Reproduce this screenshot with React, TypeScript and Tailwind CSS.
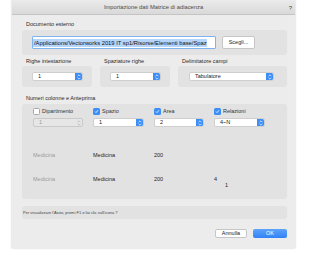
import React from 'react';

const font = { fontFamily: '"Liberation Sans", Arial, sans-serif' };

const Stepper: React.FC<{ disabled?: boolean }> = ({ disabled }) => (
  <div
    className={
      disabled
        ? 'w-[7px] h-full flex items-center justify-center text-[#b0b0b0]'
        : 'w-[7px] h-full flex items-center justify-center bg-[#3d8ef6] rounded-r-[1.5px] text-white'
    }
  >
    <svg width="4" height="6" viewBox="0 0 4 6">
      <path d="M0.6 2.2 L2 0.8 L3.4 2.2 M0.6 3.8 L2 5.2 L3.4 3.8" fill="none" stroke="currentColor" strokeWidth="0.7" />
    </svg>
  </div>
);

const Select: React.FC<{ value: string; width: string; disabled?: boolean }> = ({ value, width, disabled }) => (
  <div
    className={
      (disabled ? 'bg-[#e6e6e6] border-[#c9c9c9] text-[#9a9a9a] ' : 'bg-white border-[#cfcfcf] text-[#222] ') +
      width +
      ' h-[9px] border-[0.5px] rounded-[2px] flex items-center justify-between text-[5.5px] leading-none'
    }
  >
    <span className="pl-[5px]">{value}</span>
    <Stepper disabled={disabled} />
  </div>
);

const Check: React.FC<{ checked?: boolean; label: string }> = ({ checked, label }) => (
  <div className="flex items-center gap-[2px] h-[7px]">
    {checked ? (
      <div className="w-[7px] h-[7px] rounded-[1.5px] bg-[#3d8ef6] flex items-center justify-center">
        <svg width="5" height="5" viewBox="0 0 5 5">
          <path d="M1 2.6 L2 3.6 L4 1.2" fill="none" stroke="white" strokeWidth="0.8" />
        </svg>
      </div>
    ) : (
      <div className="w-[7px] h-[7px] rounded-[1.5px] bg-white border-[0.5px] border-[#a8a8a8]" />
    )}
    <span className="text-[5.5px] leading-none text-[#333]">{label}</span>
  </div>
);

const Label: React.FC<{ children: React.ReactNode }> = ({ children }) => (
  <div className="h-[8px] leading-[8px] text-[5.5px] text-[#2a2a2a] pl-[4px]">{children}</div>
);

export default function App() {
  return (
    <div className="w-[309px] h-[255px] bg-white" style={font}>
      <div className="ml-[12px] w-[283px] h-[248px] bg-[#ececec] flex flex-col shadow-[0_0_2px_rgba(0,0,0,0.25)]">
        {/* title bar */}
        <div className="h-[15px] flex items-center justify-center relative bg-gradient-to-b from-[#ebebeb] to-[#d9d9d9] border-b-[0.5px] border-[#c4c4c4]">
          <span className="text-[5.8px] text-[#4a4a4a]">Importazione dati Matrice di adiacenza</span>
          <span className="absolute right-[3px] top-[4px] text-[6px] text-[#4a4a4a]">?</span>
        </div>

        <div className="pl-[10px] pr-[8px] flex flex-col">
          <div className="mt-[5px]">
            <Label>Documento esterno</Label>
          </div>
          <div className="mt-[2px] h-[25px] rounded-[3px] bg-[#e2e2e2] flex items-center pl-[10px]">
            <div className="w-[184px] h-[13px] bg-white border-[1.5px] border-[#7eb3f2] rounded-[1px] flex items-center overflow-hidden">
              <span className="bg-[#b5d5fb] text-[5.8px] leading-[8px] text-[#111] whitespace-nowrap pl-[1px]">
                /Applications/Vectorworks 2019 IT sp1/Risorse/Elementi base/Spaz
              </span>
            </div>
            <div className="ml-[6px] w-[33px] h-[13px] bg-white border-[0.5px] border-[#c6c6c6] rounded-[2px] flex items-center justify-center text-[5.5px] text-[#222]">
              Scegli...
            </div>
          </div>

          <div className="mt-[2px] flex gap-[8px]">
            <div className="w-[70px]">
              <Label>Righe intestazione</Label>
              <div className="mt-[1px] h-[21px] rounded-[3px] bg-[#e2e2e2] flex items-center pl-[10px]">
                <Select value="1" width="w-[51px]" />
              </div>
            </div>
            <div className="w-[70px]">
              <Label>Spaziature righe</Label>
              <div className="mt-[1px] h-[21px] rounded-[3px] bg-[#e2e2e2] flex items-center pl-[10px]">
                <Select value="1" width="w-[51px]" />
              </div>
            </div>
            <div className="flex-1">
              <Label>Delimitatore campi</Label>
              <div className="mt-[1px] h-[21px] rounded-[3px] bg-[#e2e2e2] flex items-center pl-[11px]">
                <Select value="Tabulatore" width="w-[85px]" />
              </div>
            </div>
          </div>

          <div className="mt-[7px]">
            <Label>Numeri colonne e Anteprima</Label>
          </div>
          <div className="mt-[2px] h-[95px] rounded-[3px] bg-[#e2e2e2] pl-[11px] pt-[4px]">
            <div className="grid grid-cols-[60px_61px_60px_60px]">
              <Check label="Dipartimento" />
              <Check checked label="Spazio" />
              <Check checked label="Area" />
              <Check checked label="Relazioni" />
            </div>
            <div className="mt-[3px] grid grid-cols-[60px_61px_60px_60px]">
              <Select value="1" width="w-[50px]" disabled />
              <Select value="1" width="w-[51px]" />
              <Select value="2" width="w-[50px]" />
              <Select value="4~N" width="w-[51px]" />
            </div>
            <div className="mt-[24px] grid grid-cols-[60px_61px_60px_60px] text-[5.5px] leading-[8px] text-[#222]">
              <span className="text-[#9a9a9a]">Medicina</span>
              <span>Medicina</span>
              <span>200</span>
              <span />
            </div>
            <div className="mt-[16px] grid grid-cols-[60px_61px_60px_60px] text-[5.5px] leading-[8px] text-[#222]">
              <span className="text-[#9a9a9a]">Medicina</span>
              <span>Medicina</span>
              <span>200</span>
              <span>4</span>
            </div>
            <div className="-mt-[1px] grid grid-cols-[60px_61px_60px_60px] text-[5.5px] leading-[6px] text-[#222]">
              <span />
              <span />
              <span />
              <span className="pl-[11px]">1</span>
            </div>
          </div>

          <div className="mt-[7px] h-[13px] rounded-[3px] bg-[#e2e2e2] pl-[1px] flex items-center">
            <span className="text-[4px] text-[#444] leading-none">Per visualizzare l'Aiuto, premi F1 o fai clic sull'icona ?</span>
          </div>

          <div className="mt-[10px] flex justify-end gap-[6px]">
            <div className="w-[32px] h-[9px] bg-white border-[0.5px] border-[#c6c6c6] rounded-[2px] flex items-center justify-center text-[5.5px] text-[#222]">
              Annulla
            </div>
            <div className="w-[34px] h-[9px] bg-gradient-to-b from-[#5ea3fa] to-[#2f82f5] rounded-[2px] flex items-center justify-center text-[5.5px] text-white">
              OK
            </div>
          </div>
        </div>
      </div>
    </div>
  );
}
